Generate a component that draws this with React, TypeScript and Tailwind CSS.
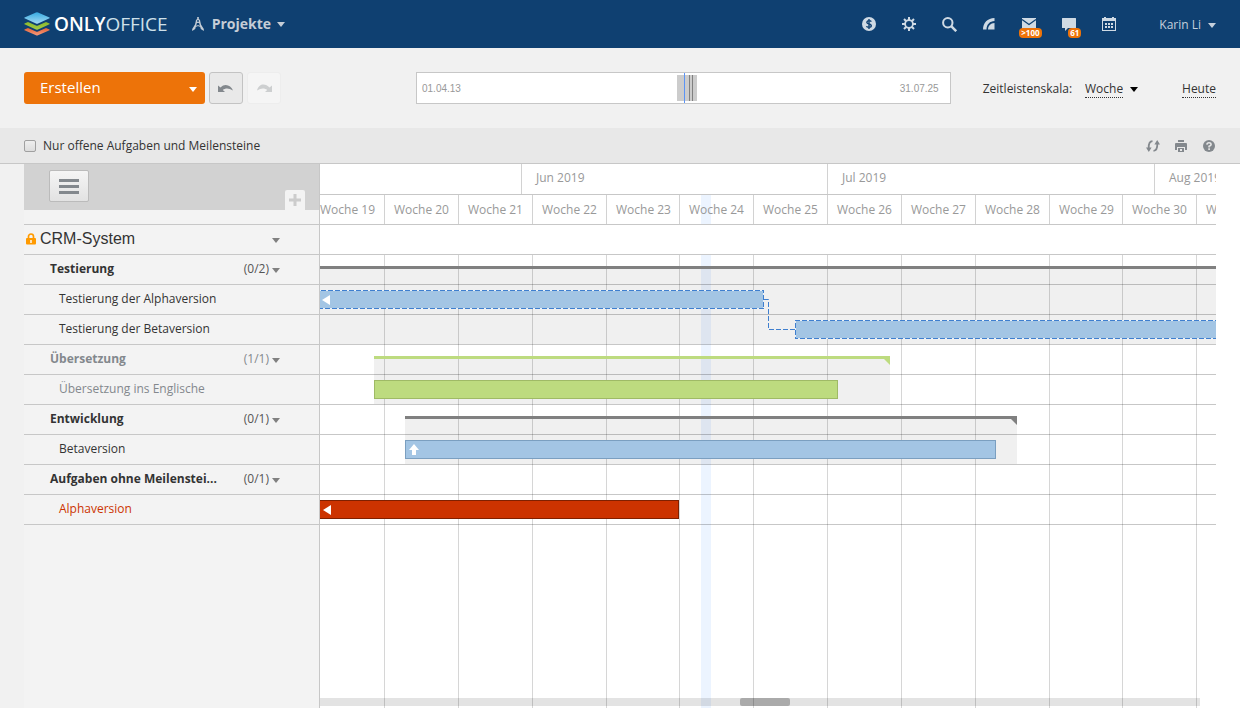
import type { ReactNode } from "react";

const DAY_WIDTH = 10.545;
const FIRST_WEEK = 19;
const WEEK_COUNT = 13;

// day 0 is the monday of week 19, it starts a bit left of the visible area
const dayX = (day: number) => Math.round(day * DAY_WIDTH - 9.6);

type Task = {
  name: string;
  start: number;
  end: number;
  kind: "open" | "planned" | "closed" | "overdue";
  icon?: "left" | "up";
};

type Milestone = {
  name: string;
  count: string;
  start?: number;
  end?: number;
  closed?: boolean;
  link?: boolean;
  tasks: Task[];
};

const MILESTONES: Milestone[] = [
  {
    name: "Testierung",
    count: "(0/2)",
    start: 0,
    end: 91,
    link: true,
    tasks: [
      { name: "Testierung der Alphaversion", start: -1, end: 43, kind: "planned", icon: "left" },
      { name: "Testierung der Betaversion", start: 46, end: 91, kind: "planned" },
    ],
  },
  {
    name: "Übersetzung",
    count: "(1/1)",
    start: 6,
    end: 55,
    closed: true,
    tasks: [{ name: "Übersetzung ins Englische", start: 6, end: 50, kind: "closed" }],
  },
  {
    name: "Entwicklung",
    count: "(0/1)",
    start: 9,
    end: 67,
    tasks: [{ name: "Betaversion", start: 9, end: 65, kind: "open", icon: "up" }],
  },
  {
    name: "Aufgaben ohne Meilenstei...",
    count: "(0/1)",
    tasks: [{ name: "Alphaversion", start: -1, end: 35, kind: "overdue", icon: "left" }],
  },
];

const MONTHS = [
  { label: "", start: 0, end: 20 },
  { label: "Jun 2019", start: 20, end: 49 },
  { label: "Jul 2019", start: 49, end: 80 },
  { label: "Aug 2019", start: 80, end: 91 },
];

const WEEKS = Array.from({ length: WEEK_COUNT }, (_, i) => ({
  label: `Woche ${FIRST_WEEK + i}`,
  start: i * 7,
  end: i * 7 + 7,
}));

function Caret({ className = "" }: { className?: string }) {
  return (
    <svg className={`shrink-0 ${className}`} width="8" height="5" viewBox="0 0 8 5" fill="currentColor">
      <path d="M0 0h8L4 5z" />
    </svg>
  );
}

function Logo() {
  return (
    <svg width="26" height="24" viewBox="0 0 26 24">
      <defs>
        <linearGradient id="logo-blue" x1="0" y1="0" x2="0" y2="1">
          <stop offset="0" stopColor="#35a9e1" />
          <stop offset="1" stopColor="#a4daf3" />
        </linearGradient>
        <linearGradient id="logo-green" x1="0" y1="0" x2="0" y2="1">
          <stop offset="0" stopColor="#8ab82c" />
          <stop offset="1" stopColor="#a5cc45" />
        </linearGradient>
        <linearGradient id="logo-orange" x1="0" y1="0" x2="0" y2="1">
          <stop offset="0" stopColor="#e2643a" />
          <stop offset="1" stopColor="#f59a7c" />
        </linearGradient>
      </defs>
      <path d="M.5 17.500L4 16l8 3.500q1 .4 2 0L22 16l3.500 1.500q.5.4 0 .8L14 23.300q-1 .4-2 0L.5 18.300q-.5-.4 0-.8z" fill="url(#logo-orange)" />
      <path d="M.5 11.500L4 10l8 3.500q1 .4 2 0L22 10l3.500 1.500q.5.4 0 .8L14 17.500q-1 .4-2 0L.5 12.300q-.5-.4 0-.8z" fill="url(#logo-green)" />
      <path d="M.5 5.500L12 .4q1-.4 2 0l11.500 5.100q.5.4 0 .8L14 11.500q-1 .4-2 0L.5 6.300q-.5-.4 0-.8z" fill="url(#logo-blue)" />
    </svg>
  );
}

function IconButton({ label, children }: { label: string; children: ReactNode }) {
  return (
    <button aria-label={label} className="relative flex h-10 w-10 items-center justify-center text-[#cfdae4]">
      {children}
    </button>
  );
}

function Badge({ className, children }: { className: string; children: ReactNode }) {
  return (
    <span className={`absolute top-6 left-1/2 rounded bg-[#ed7309] px-0.5 text-[8px] leading-[10px] font-bold text-white ${className}`}>
      {children}
    </span>
  );
}

function Header() {
  return (
    <header className="flex h-12 items-center bg-[#0f4071] px-6">
      <a href="#" className="flex items-center gap-1">
        <Logo />
        <span className="text-[19px] leading-6 font-semibold text-white">
          ONLY<span className="font-medium text-[#cfe0ea]">OFFICE</span>
        </span>
      </a>
      <button className="ml-6 flex items-center gap-2 text-[#c5cdd6]">
        <svg width="12" height="14" viewBox="0 0 12 14" fill="currentColor">
          <path d="M5.200 0h1.600v2q1.700.7 1.500 2.500L9 7.500l2.800 4.500v2L8.800 12 7 5.800Q6 6.400 5 5.800L3.200 12 .2 14v-2L3 7.500l.7-3Q3.500 2.700 5.200 2z" />
          <path d="M3.500 9.500q2.500-1.800 5 0" fill="none" stroke="currentColor" />
          <circle cx="6" cy="4" r=".9" fill="#0f4071" />
        </svg>
        <span className="flex items-center gap-1.5">
          <span className="text-sm leading-6 font-bold">Projekte</span>
          <Caret />
        </span>
      </button>

      <nav className="ml-auto flex items-center">
        <IconButton label="Zahlungen">
          <svg width="14" height="14" viewBox="0 0 14 14" fill="none">
            <circle cx="7" cy="7" r="7" fill="currentColor" />
            <path d="M9.300 4.700Q8.700 3.600 7 3.600T4.800 5.300Q4.900 6.600 7 7T9.300 8.700Q9.200 10.300 7 10.300T4.500 9.100M7 2v10" stroke="#0f4071" strokeWidth="1.400" />
          </svg>
        </IconButton>
        <IconButton label="Einstellungen">
          <svg width="14" height="14" viewBox="0 0 14 14" fill="none" stroke="currentColor">
            <circle cx="7" cy="7" r="3.900" strokeWidth="1.800" />
            <path d="M7 0v3M7 11v3M0 7h3M11 7h3M2 2l2 2M10 10L12 12M12 2L10 4M4 10L2 12" strokeWidth="2" />
          </svg>
        </IconButton>
        <IconButton label="Suche">
          <svg width="15" height="15" viewBox="0 0 15 15" fill="none" stroke="currentColor">
            <circle cx="5.800" cy="5.800" r="4.700" strokeWidth="2" />
            <path d="M9.200 9.200l5 5" strokeWidth="2.500" />
          </svg>
        </IconButton>
        <IconButton label="Feed">
          <svg width="12" height="12" viewBox="0 0 12 12" fill="currentColor">
            <path d="M0 11.500C0 5 4.500 0 11.500 0v3C7 3 3.500 6.500 3.500 11.500z" />
            <path d="M5 11.500C5 8 7.500 5 11.500 5v6.500z" />
          </svg>
        </IconButton>
        <IconButton label="E-Mail">
          <svg width="14" height="12" viewBox="0 0 14 12" fill="none">
            <path d="M0 0h14v12H0z" fill="currentColor" />
            <path d="M0 1.500l7 5 7-5" stroke="#0f4071" strokeWidth="1.300" />
          </svg>
          <Badge className="-ml-2.5">&gt;100</Badge>
        </IconButton>
        <IconButton label="Chat">
          <svg width="14" height="13" viewBox="0 0 14 13" fill="currentColor">
            <path d="M0 .5q0-.5.5-.5h13q.5 0 .5.5v9q0 .5-.5.5H6l-3 3v-3H.5q-.5 0-.5-.5z" />
          </svg>
          <Badge className="-ml-px">61</Badge>
        </IconButton>
        <IconButton label="Kalender">
          <svg width="14" height="15" viewBox="0 0 14 15" fill="currentColor">
            <path d="M0 1h14v13H0zM1 4v9h12V4z" fillRule="evenodd" />
            <path d="M2 0h2v2H2zM10 0h2v2h-2z" />
            <path d="M3 6h2v2H3zM6 6h2v2H6zM9 6h2v2H9zM3 9h2v2H3zM6 9h2v2H6zM9 9h2v2H9z" />
          </svg>
        </IconButton>
        <button className="ml-[30px] flex items-center gap-[7px] pt-0.5 text-xs text-[#c5d0dc]">
          Karin Li
          <Caret />
        </button>
      </nav>
    </header>
  );
}

function Toolbar() {
  return (
    <div className="flex h-20 items-center bg-[#f1f1f1] px-6">
      <div className="flex gap-1">
        <button className="flex h-8 w-[181px] items-center justify-between rounded-[3px] bg-[#ed7309] pr-2 pb-0.5 pl-4 text-[15px] text-white">
          Erstellen
          <Caret className="mt-1" />
        </button>
        <button aria-label="Rückgängig" className="flex h-8 w-[34px] items-center justify-center rounded-[3px] border border-[#c3c3c3] bg-[#e9e9e9] text-[#83888d]">
          <svg width="16" height="9" viewBox="0 0 16 9" fill="currentColor">
            <path d="M0 1.500V8h7L4.800 6C7.500 3.800 11 4 15 6.500 13 1 6.500-1 2.500 3.600z" />
          </svg>
        </button>
        <button aria-label="Wiederholen" disabled className="flex h-8 w-[34px] items-center justify-center rounded-[3px] border border-[#ededed] bg-[#f5f5f5] text-[#cdcfd0]">
          <svg width="16" height="9" viewBox="0 0 16 9" fill="currentColor">
            <path d="M16 1.500V8H9l2.200-2C8.500 3.800 5 4 1 6.500 3-1 9.500-1 13.500 3.600z" />
          </svg>
        </button>
      </div>

      <div className="relative ml-[135px] flex h-8 flex-1 items-center justify-between border border-[#c7c7c7] bg-white pr-[11px] pl-[5px] font-['Liberation_Sans',Arial,sans-serif] text-[10px] text-[#999]">
        <span>01.04.13</span>
        <span>31.07.25</span>
        <input
          type="range"
          aria-label="Zeitraum"
          min={0}
          max={1000}
          defaultValue={507}
          className="absolute inset-0 h-full w-full appearance-none bg-transparent [&::-webkit-slider-thumb]:h-[26px] [&::-webkit-slider-thumb]:w-5 [&::-webkit-slider-thumb]:appearance-none [&::-webkit-slider-thumb]:bg-[linear-gradient(90deg,#ccc_12px,#808080_12px,#808080_13px,#ccc_13px,#ccc_15px,#808080_15px,#808080_16px,#ccc_16px)]"
        />
        <span className="pointer-events-none absolute inset-y-0 left-1/2 ml-px w-px bg-[#5c94f5]" />
      </div>

      <div className="ml-8 flex items-center pt-0.5 text-xs text-[#333]">
        <label htmlFor="scale">Zeitleistenskala:</label>
        <span className="ml-[13px] flex items-center gap-[7px]">
          <select id="scale" defaultValue="week" className="w-[38px] appearance-none border-b border-dotted border-[#333] bg-transparent leading-4">
            <option value="week">Woche</option>
          </select>
          <Caret className="text-black" />
        </span>
        <a href="#" className="ml-11 border-b border-dotted border-[#333] leading-4">Heute</a>
      </div>
    </div>
  );
}

function FilterBar() {
  return (
    <div className="flex h-9 items-center border-b border-[#c7c7c7] bg-[#e8e8e8] px-6">
      <label className="flex items-center gap-[7px] text-xs text-[#333]">
        <input type="checkbox" className="h-3 w-3 appearance-none rounded-[2px] border border-[#a0a0a0] bg-linear-to-b from-[#eee] to-[#ddd]" />
        Nur offene Aufgaben und Meilensteine
      </label>
      <div className="-mr-[7px] ml-auto flex items-center text-[#83888d]">
        <button aria-label="Aktualisieren" className="flex w-7 justify-center">
          <svg width="14" height="12" viewBox="0 0 14 12" fill="none" stroke="currentColor" strokeWidth="1.800">
            <path d="M6.500 1.200Q2.500 1.500 2.700 8M7.500 10.800q4-.3 3.800-6.800" />
            <path d="M0 7.500h5.600L2.800 12zM8.400 4.500H14L11.200 0z" fill="currentColor" stroke="none" />
          </svg>
        </button>
        <button aria-label="Drucken" className="flex w-7 justify-center">
          <svg width="12" height="12" viewBox="0 0 12 12" fill="currentColor">
            <path d="M3 0h6v2H3z" />
            <path d="M0 4q0-1 1-1h10q1 0 1 1v6h-2V7H2v3H0z" />
            <path d="M3 8h6v4H3zM5 9v2h2V9z" fillRule="evenodd" />
          </svg>
        </button>
        <button aria-label="Hilfe" className="flex w-7 justify-center">
          <svg width="12" height="12" viewBox="0 0 12 12" fill="none">
            <circle cx="6" cy="6" r="6" fill="currentColor" />
            <path d="M3.900 4.600Q4 2.800 6 2.800t2.100 1.700Q8.100 5.700 6.100 6.300V7.500M6.100 8.300V10" stroke="#e8e8e8" strokeWidth="1.600" />
          </svg>
        </button>
      </div>
    </div>
  );
}

function TaskPanel() {
  return (
    <aside className="w-[296px] shrink-0 border-r border-[#c7c7c7] bg-[#f3f3f3] text-xs text-[#333]">
      <div className="flex h-[46px] items-end justify-between bg-[#d2d2d2] pr-3.5 pl-[25px]">
        <button aria-label="Menü" className="mb-2 flex h-8 w-10 flex-col items-center justify-center gap-[3px] rounded-[2px] border border-[#bbb] bg-linear-to-b from-[#f5f5f5] to-[#e2e2e2]">
          <span className="h-[3px] w-5 bg-[#83888d]" />
          <span className="h-[3px] w-5 bg-[#83888d]" />
          <span className="h-[3px] w-5 bg-[#83888d]" />
        </button>
        <button aria-label="Hinzufügen" className="flex h-5 w-5 items-center justify-center rounded-t-[2px] bg-[#f3f3f3] text-[#ccc]">
          <svg width="12" height="12" viewBox="0 0 12 12" stroke="currentColor" strokeWidth="3">
            <path d="M6 0v12M0 6h12" />
          </svg>
        </button>
      </div>
      <div className="h-[15px] border-b border-[#c7c7c7]" />
      <div className="flex h-[30px] items-center border-b border-[#c7c7c7] pr-[39px] pb-0.5 pl-0.5">
        <svg width="10" height="12" viewBox="0 0 10 12" fill="none">
          <path d="M2.500 6V3.500a2.500 2.500 0 0 1 5 0V6" stroke="#ff9a00" strokeWidth="1.700" />
          <path d="M1 5h8q1 0 1 1v4.500q0 1-1 1H1q-1 0-1-1V6q0-1 1-1z" fill="#ff9a00" />
          <path d="M4.300 7h1.400v3H4.300z" fill="#fff" />
        </svg>
        <h1 className="ml-1 font-['Liberation_Sans',Arial,sans-serif] text-base leading-5">CRM-System</h1>
        <Caret className="mt-1 ml-auto text-[#808080]" />
      </div>
      {MILESTONES.map((m) => (
        <section key={m.name}>
          <div className={`flex h-[30px] items-center border-b border-[#c7c7c7] pr-[39px] pb-0.5 pl-[26px] ${m.closed ? "text-[#83888d]" : ""}`}>
            <h2 className="font-bold">{m.name}</h2>
            <span className={`ml-auto ${m.closed ? "" : "text-[#555]"}`}>{m.count}</span>
            <Caret className="mt-1 ml-[3px] text-[#808080]" />
          </div>
          {m.tasks.map((t) => (
            <div
              key={t.name}
              className={`flex h-[30px] items-center border-b border-[#c7c7c7] pb-0.5 pl-[35px] ${
                t.kind === "closed" ? "text-[#83888d]" : t.kind === "overdue" ? "text-[#cc3300]" : ""
              }`}
            >
              {t.name}
            </div>
          ))}
        </section>
      ))}
    </aside>
  );
}

const BAR_STYLES = {
  open: "border border-[#7b9fc0] bg-[#a3c5e4]",
  planned: "bg-[#a3c5e4]",
  closed: "border border-[#9fba66] bg-[#bddb7f]",
  overdue: "border border-[#7f2000] bg-[#cc3300]",
};

function TaskBar({ task }: { task: Task }) {
  const x = dayX(task.start);
  return (
    <div
      className={`absolute top-[5px] h-[19px] ${BAR_STYLES[task.kind]}`}
      style={{ left: x, width: dayX(task.end) - x }}
    >
      {task.kind === "planned" && (
        // only the inner half of the 2px stroke is visible
        <svg className="absolute inset-0 h-full w-full overflow-hidden" fill="none" strokeWidth="2">
          <rect width="100%" height="100%" stroke="#e8f0f8" />
          <rect width="100%" height="100%" stroke="#3f7fcf" strokeDasharray="5 2" />
        </svg>
      )}
      {task.icon === "up" && (
        <svg className="absolute top-[3px] left-[3px]" width="10" height="11" viewBox="0 0 10 11" fill="#fff">
          <path d="M5 0l5 6H7v5H3V6H0z" />
        </svg>
      )}
      {task.icon === "left" && (
        <svg className="absolute inset-y-0 my-auto" style={{ left: 2 - x }} width="8" height="10" viewBox="0 0 8 10" fill="#fff">
          <path d="M8 0v10L0 5z" />
        </svg>
      )}
    </div>
  );
}

function MilestoneRows({ milestone }: { milestone: Milestone }) {
  const { start, end, closed, link, tasks } = milestone;
  return (
    <div className="relative">
      {start !== undefined && end !== undefined && (
        <div
          className={`absolute top-[11px] bottom-px border-t-[3px] bg-black/6 ${closed ? "border-[#bddb7f] text-[#bddb7f]" : "border-[#808080] text-[#808080]"}`}
          style={{ left: dayX(start), width: dayX(end) - dayX(start) }}
        >
          <svg className="absolute top-0 right-0" width="6" height="6" viewBox="0 0 6 6" fill="currentColor">
            <path d="M0 0h6v6z" />
          </svg>
        </div>
      )}
      <div className="h-[30px] border-b border-black/22" />
      {tasks.map((t) => (
        <div key={t.name} className="relative h-[30px] border-b border-black/22">
          <TaskBar task={t} />
        </div>
      ))}
      {link && (
        <svg
          className="absolute top-[44px]"
          style={{ left: dayX(tasks[0].end) }}
          width="31"
          height="32"
          viewBox="0 0 31 32"
          fill="none"
          stroke="#3f7fcf"
          strokeDasharray="5 2"
        >
          <path d="M0 .5h4.500v30H31" />
        </svg>
      )}
    </div>
  );
}

function Chart() {
  return (
    <main className="relative mr-6 flex min-w-0 flex-1 flex-col overflow-hidden bg-white text-xs text-[#999]">
      <div className="flex h-[31px] border-b border-[#c7c7c7]">
        {MONTHS.map((m, i) => (
          <div
            key={m.start}
            className={`flex shrink-0 items-center pb-0.5 whitespace-nowrap ${i === 0 ? "" : "border-l border-[#d2d2d2] pl-3.5"}`}
            style={{ width: dayX(m.end) - Math.max(0, dayX(m.start)) }}
          >
            {m.label}
          </div>
        ))}
      </div>
      <div className="relative flex h-[30px] border-b border-[#c7c7c7]">
        <div className="absolute inset-y-0 bg-[#ecf4ff]" style={{ left: dayX(37), width: 10 }} />
        {WEEKS.map((w, i) => (
          <div
            key={w.start}
            className={`relative flex shrink-0 items-center whitespace-nowrap ${i === 0 ? "justify-end pr-[9px]" : "border-l border-[#d2d2d2] pl-[9px]"}`}
            style={{ width: dayX(w.end) - Math.max(0, dayX(w.start)) }}
          >
            {w.label}
          </div>
        ))}
      </div>
      <div className="h-[30px] border-b border-[#c7c7c7]" />
      <div className="relative flex-1">
        <div className="absolute inset-0 flex overflow-hidden">
          <div className="absolute inset-y-0 bg-[#ecf4ff]" style={{ left: dayX(37), width: 10 }} />
          {WEEKS.map((w, i) => (
            <div
              key={w.start}
              className={`relative shrink-0 ${i === 0 ? "" : "border-l border-[#d6d6d6]"}`}
              style={{ width: dayX(w.end) - Math.max(0, dayX(w.start)) }}
            />
          ))}
        </div>
        {MILESTONES.map((m) => (
          <MilestoneRows key={m.name} milestone={m} />
        ))}
      </div>
      {/* horizontal scrollbar */}
      <div className="absolute right-4 bottom-0.5 left-0 h-2 bg-black/11">
        <div className="mx-auto h-full w-[50px] translate-x-[5px] rounded-[2px] bg-black/25" />
      </div>
    </main>
  );
}

export default function App() {
  return (
    <div className="flex min-h-screen flex-col bg-white font-['Open_Sans',sans-serif]">
      <Header />
      <Toolbar />
      <FilterBar />
      <div className="flex flex-1">
        <div className="w-6 shrink-0 bg-[#f1f1f1]" />
        <TaskPanel />
        <Chart />
      </div>
    </div>
  );
}
